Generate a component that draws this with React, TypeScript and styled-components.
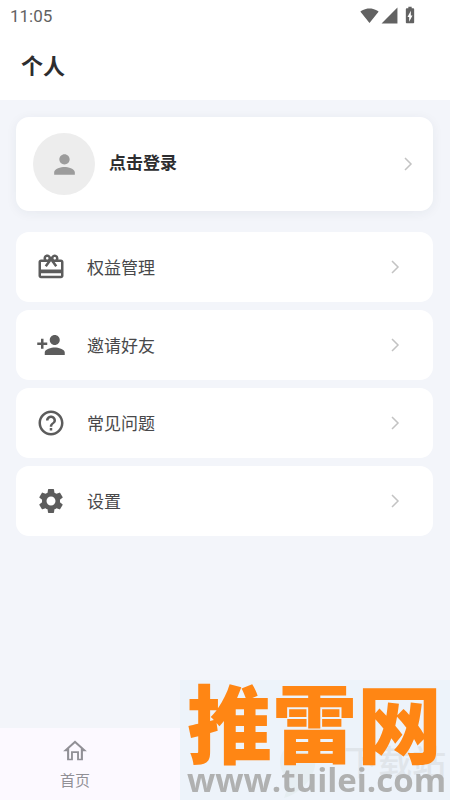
import React from "react";
import styled, { createGlobalStyle } from "styled-components";
import {
  MdPerson,
  MdPersonAdd,
  MdHelpOutline,
  MdSettings,
  MdSignalWifi4Bar,
  MdSignalCellular4Bar,
  MdBatteryChargingFull,
} from "react-icons/md";

const GlobalStyle = createGlobalStyle`
  * { box-sizing: border-box; }
  body { margin: 0; background: #f3f5fa; }
  button { border: 0; padding: 0; margin: 0; font: inherit; color: inherit; background: none; text-align: left; cursor: pointer; }
  svg { display: block; flex: none; }
`;

const Page = styled.div`
  min-height: 100vh;
  display: flex;
  flex-direction: column;
  font-family: "Noto Sans CJK SC", sans-serif;
  color: #2d2d2f;
  background: #f3f5fa;
`;

const Header = styled.header`
  background: #fff;
`;

const StatusBar = styled.div`
  height: 32px;
  padding: 0 30px 0 10px;
  display: flex;
  align-items: center;
  justify-content: space-between;
  font-family: Roboto, sans-serif;
  font-size: 17px;
  color: #626262;
`;

const StatusIcons = styled.div`
  display: flex;
  align-items: center;
  gap: 1px;
  padding-bottom: 2px;
`;

const Title = styled.h1`
  margin: 0;
  padding: 0 21px 4px;
  font-size: 22px;
  line-height: 64px;
  font-weight: 700;
`;

const Main = styled.main`
  flex: 1;
  padding: 17px 17px 24px 16px;
`;

const LoginCard = styled.button`
  width: 100%;
  height: 94px;
  padding: 0 16px 0 17px;
  display: flex;
  align-items: center;
  gap: 14px;
  border-radius: 13px;
  background: #fff;
  box-shadow: 0 2px 12px rgba(40, 45, 60, 0.06);
`;

const Avatar = styled.span`
  width: 62px;
  height: 62px;
  display: grid;
  place-items: center;
  border-radius: 50%;
  background: #ededed;
  color: #9c9c9c;
`;

const LoginText = styled.span`
  flex: 1;
  padding-bottom: 4px;
  font-size: 17px;
  line-height: 24px;
  font-weight: 700;
`;

const Menu = styled.nav`
  margin-top: 21px;
  display: flex;
  flex-direction: column;
  gap: 8px;
`;

const MenuRow = styled.button`
  height: 70px;
  padding: 0 29px 0 20px;
  display: flex;
  align-items: center;
  gap: 21px;
  border-radius: 13px;
  background: #fff;
  color: #5c5c5c;
`;

const MenuText = styled.span`
  flex: 1;
  font-size: 17px;
  line-height: 24px;
  color: #48484a;
`;

const TabBar = styled.nav`
  height: 72px;
  display: grid;
  grid-template-columns: repeat(3, 1fr);
  background: #fcf9ff;
`;

const Tab = styled.button`
  display: flex;
  flex-direction: column;
  align-items: center;
  padding-top: 9px;
  gap: 4px;
  font-size: 15px;
  line-height: 22px;
  color: #919096;
`;

const Stamp = styled.aside`
  position: fixed;
  right: 0;
  bottom: 0;
  width: 270px;
  height: 120px;
  padding-left: 7px;
  background: #edf3fa;
  white-space: nowrap;
`;

const StampName = styled.div`
  position: relative;
  font-weight: 900;
  font-size: 85px;
  line-height: 80px;
  color: #ff8614;
`;

const StampUrl = styled.div`
  position: relative;
  font-family: "Open Sans", sans-serif;
  font-weight: 700;
  font-size: 33px;
  line-height: 40px;
  color: #b0b1b1;
`;

const Ghost = styled.div`
  position: absolute;
  right: 4px;
  bottom: 18px;
  font-weight: 500;
  font-size: 34px;
  line-height: 42px;
  color: #e0e5ea;
`;

const Emblem = styled.svg`
  position: absolute;
  left: 98px;
  bottom: 0;
`;

const Chevron = () => (
  <svg width="18" height="18" viewBox="0 0 18 18" fill="none" stroke="#c3c3c3" strokeWidth="1.5">
    <path d="M6 3l6 6-6 6" />
  </svg>
);

const GiftCard = () => (
  <svg width="30" height="30" viewBox="0 0 24 24" fill="currentColor">
    <path d="M20 6h-2.18c.11-.31.18-.65.18-1a2.996 2.996 0 0 0-5.5-1.65l-.5.67-.5-.68C10.96 2.54 10.05 2 9 2 7.34 2 6 3.34 6 5c0 .35.07.69.18 1H4c-1.11 0-1.99.89-1.99 2L2 19c0 1.11.89 2 2 2h16c1.11 0 2-.89 2-2V8c0-1.11-.89-2-2-2zm-5-2c.55 0 1 .45 1 1s-.45 1-1 1-1-.45-1-1 .45-1 1-1zM9 4c.55 0 1 .45 1 1s-.45 1-1 1-1-.45-1-1 .45-1 1-1zm11 15H4v-2h16v2zm0-5H4V8h5.08L7 10.83 8.62 12 12 7.4l3.38 4.6L17 10.83 14.92 8H20v6z" />
  </svg>
);

const HomeIcon = () => (
  <svg width="28" height="28" viewBox="0 0 24 24" fill="currentColor">
    <path d="M12 5.3l5 4.5V18.6h-1.6v-6.4H8.6v6.4H7V9.8l5-4.5M12 3L1.8 12.2h3.4V20h5V13.8h3.6V20h5v-7.8h3.4L12 3z" />
  </svg>
);

const items = [
  { label: "权益管理", icon: <GiftCard /> },
  { label: "邀请好友", icon: <MdPersonAdd size={30} /> },
  { label: "常见问题", icon: <MdHelpOutline size={30} /> },
  { label: "设置", icon: <MdSettings size={30} /> },
];

export default function App() {
  return (
    <Page>
      <GlobalStyle />
      <Header>
        <StatusBar>
          <span>11:05</span>
          <StatusIcons>
            <MdSignalWifi4Bar size={19} />
            <MdSignalCellular4Bar size={19} />
            <MdBatteryChargingFull size={20} />
          </StatusIcons>
        </StatusBar>
        <Title>个人</Title>
      </Header>
      <Main>
        <LoginCard>
          <Avatar>
            <MdPerson size={31} />
          </Avatar>
          <LoginText>点击登录</LoginText>
          <Chevron />
        </LoginCard>
        <Menu>
          {items.map((item) => (
            <MenuRow key={item.label}>
              {item.icon}
              <MenuText>{item.label}</MenuText>
              <Chevron />
            </MenuRow>
          ))}
        </Menu>
      </Main>
      <TabBar>
        <Tab>
          <HomeIcon />
          首页
        </Tab>
      </TabBar>
      <Stamp>
        <Emblem width="40" height="58" viewBox="0 0 40 58" fill="#e6eef2">
          <path d="M20 2C9 2 2 10 2 20c0 9 5 14 10 18L6 56c14-4 28-16 31-32C39 11 32 2 20 2z" />
        </Emblem>
        <Ghost>下载站</Ghost>
        <StampName>推雷网</StampName>
        <StampUrl>www.tuilei.com</StampUrl>
      </Stamp>
    </Page>
  );
}
